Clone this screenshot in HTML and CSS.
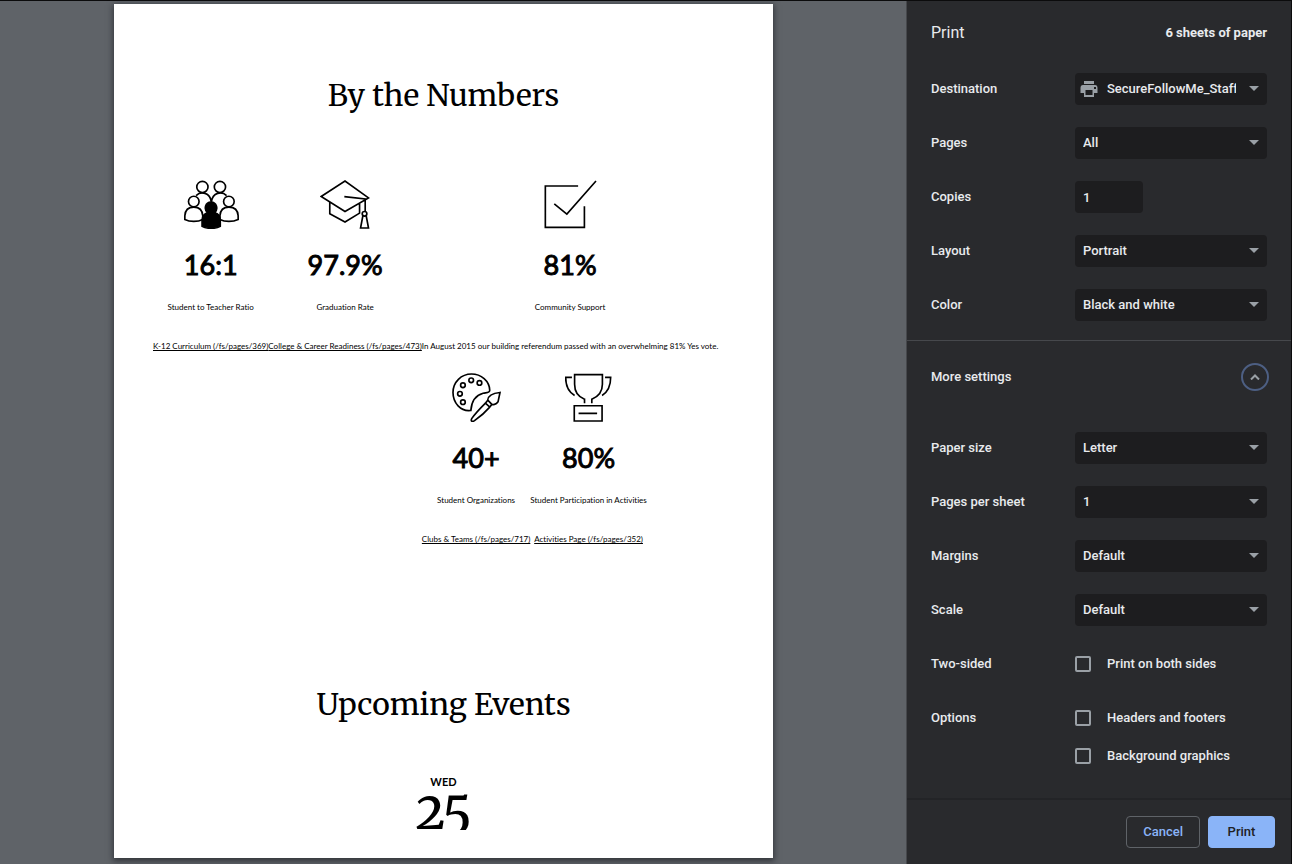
FILE: index.html
```html
<!DOCTYPE html>
<html lang="en">
<head>
<meta charset="utf-8">
<title>Print</title>
<link rel="stylesheet" href="styles.css">
</head>
<body>
<div class="dialog">
  <main class="preview">
    <article class="paper">
      <h1 class="heading">By the Numbers</h1>
      <div class="stats">
        <section class="stat">
          <svg class="icon" viewBox="126 44 168 148" width="56" height="49" aria-hidden="true">
            <circle cx="184" cy="65" r="17"/><circle cx="237" cy="65" r="17"/>
            <path d="M165 91C180 76 207 82 211 110M211 110C215 82 242 76 257 91"/>
            <circle class="blank" cx="158" cy="109" r="16"/><circle class="blank" cx="264" cy="109" r="16"/>
            <path class="blank" d="M131 163V152C132 135 142 126 158 126S184 135 185 152V163C170 171 146 171 131 163ZM237 163V152C238 135 248 126 264 126S291 135 292 152V163C276 171 252 171 237 163Z"/>
            <path class="solid" d="M183 184V166C184 151 191 145 200 143C187 132 193 111 210 111S233 132 221 143C231 145 238 151 238 166V184C224 192 197 192 183 184Z"/>
          </svg>
          <strong class="figure">16:1</strong>
          <span class="label">Student to Teacher Ratio</span>
          <a class="note" href="#">K-12 Curriculum (/fs/pages/369)</a>
        </section>
        <section class="stat">
          <svg class="icon" viewBox="542 44 150 148" width="50" height="49" aria-hidden="true">
            <path d="M545 94L617 47L688 98L617 139ZM571 112V146L617 171L661 144V115M615 94L678 101V139M671 152L664 189H688L681 152"/>
            <circle cx="676" cy="146" r="7"/>
          </svg>
          <strong class="figure">97.9%</strong>
          <span class="label">Graduation Rate</span>
          <a class="note" href="#">College &amp; Career Readiness (/fs/pages/473)</a>
        </section>
        <div class="column">
          <section class="stat">
            <svg class="icon" viewBox="402 44 160 148" width="53" height="49" aria-hidden="true">
              <path d="M505 62H406V187H524V123M433 116L471 147L559 47"/>
            </svg>
            <strong class="figure">81%</strong>
            <span class="label">Community Support</span>
            <span class="note">In August 2015 our building referendum passed with an overwhelming 81% Yes vote.</span>
          </section>
          <div class="pair">
            <section class="stat">
              <svg class="icon" viewBox="124 38 148 148" width="49" height="49" aria-hidden="true">
                <path d="M181 151C150 155 127 128 127 97C127 65 152 41 183 41C212 41 237 62 238 90C238 99 228 97 218 99C196 105 183 122 181 151Z"/>
                <circle cx="157" cy="75" r="7"/><circle cx="182" cy="60" r="7"/><circle cx="207" cy="68" r="7"/><circle cx="148" cy="101" r="7"/><circle cx="157" cy="126" r="7"/>
                <path d="M269 97L263 125C257 134 247 135 243 131L232 120C233 107 249 99 269 97ZM232 120L225 129L238 141L245 132M225 129C210 144 196 158 184 175C179 184 186 187 193 181C210 169 225 156 238 141"/>
              </svg>
              <strong class="figure">40+</strong>
              <span class="label">Student Organizations</span>
              <a class="note" href="#">Clubs &amp; Teams (/fs/pages/717)</a>
            </section>
            <section class="stat">
              <svg class="icon" viewBox="466 38 142 148" width="47" height="49" aria-hidden="true">
                <path d="M525 129V117C506 110 495 98 495 72V43H579V72C579 98 565 110 547 117V129M487 51H468C468 77 476 95 495 106M587 51H604C604 77 596 95 578 106M494 137H578V183H494ZM507 160H563"/>
              </svg>
              <strong class="figure">80%</strong>
              <span class="label">Student Participation in Activities</span>
              <a class="note" href="#">Activities Page (/fs/pages/352)</a>
            </section>
          </div>
        </div>
      </div>
      <h2 class="heading events">Upcoming Events</h2>
      <div class="date"><span class="weekday">WED</span><span class="day">25</span></div>
    </article>
  </main>

  <form class="panel">
    <header class="top"><h2 class="title">Print</h2><span class="sheets">6 sheets of paper</span></header>
    <div class="settings">
      <div class="row"><label for="dest">Destination</label>
        <div class="select printer">
          <svg class="device" viewBox="0 0 18 16" width="18" height="16" aria-hidden="true"><path d="M4 0H14V3H4ZM3 4H15Q17.500 4 17.500 7V12H14V16H4V12H.5V7Q.5 4 3 4ZM5.500 9V14H12.500V9ZM14 6V8H16V6Z" fill-rule="evenodd"/></svg>
          <select id="dest"><option>SecureFollowMe_Staff</option></select>
          <svg class="arrow" viewBox="0 0 10 5" width="10" height="5" aria-hidden="true"><path d="M0 0H10L5 5Z"/></svg>
        </div></div>
      <div class="row"><label for="pages">Pages</label>
        <div class="select"><select id="pages"><option>All</option></select><svg class="arrow" viewBox="0 0 10 5" width="10" height="5" aria-hidden="true"><path d="M0 0H10L5 5Z"/></svg></div></div>
      <div class="row"><label for="copies">Copies</label><input class="copies" id="copies" type="text" inputmode="numeric" value="1"></div>
      <div class="row"><label for="layout">Layout</label>
        <div class="select"><select id="layout"><option>Portrait</option></select><svg class="arrow" viewBox="0 0 10 5" width="10" height="5" aria-hidden="true"><path d="M0 0H10L5 5Z"/></svg></div></div>
      <div class="row"><label for="color">Color</label>
        <div class="select"><select id="color"><option>Black and white</option></select><svg class="arrow" viewBox="0 0 10 5" width="10" height="5" aria-hidden="true"><path d="M0 0H10L5 5Z"/></svg></div></div>
    </div>
    <div class="more">
      <span id="more-label">More settings</span>
      <button class="collapse" type="button" aria-labelledby="more-label" aria-expanded="true"><svg viewBox="0 0 10 6" width="10" height="6" aria-hidden="true"><path d="M1 5.500L5 1.500L9 5.500"/></svg></button>
    </div>
    <div class="settings">
      <div class="row"><label for="size">Paper size</label>
        <div class="select"><select id="size"><option>Letter</option></select><svg class="arrow" viewBox="0 0 10 5" width="10" height="5" aria-hidden="true"><path d="M0 0H10L5 5Z"/></svg></div></div>
      <div class="row"><label for="per">Pages per sheet</label>
        <div class="select"><select id="per"><option>1</option></select><svg class="arrow" viewBox="0 0 10 5" width="10" height="5" aria-hidden="true"><path d="M0 0H10L5 5Z"/></svg></div></div>
      <div class="row"><label for="margins">Margins</label>
        <div class="select"><select id="margins"><option>Default</option></select><svg class="arrow" viewBox="0 0 10 5" width="10" height="5" aria-hidden="true"><path d="M0 0H10L5 5Z"/></svg></div></div>
      <div class="row"><label for="scale">Scale</label>
        <div class="select"><select id="scale"><option>Default</option></select><svg class="arrow" viewBox="0 0 10 5" width="10" height="5" aria-hidden="true"><path d="M0 0H10L5 5Z"/></svg></div></div>
      <div class="row"><span>Two-sided</span>
        <label class="check"><input type="checkbox">Print on both sides</label></div>
      <div class="row options"><span>Options</span>
        <div class="checks">
          <label class="check"><input type="checkbox">Headers and footers</label>
          <label class="check"><input type="checkbox">Background graphics</label>
        </div></div>
    </div>
    <footer class="actions">
      <button class="button cancel" type="button">Cancel</button>
      <button class="button print" type="button">Print</button>
    </footer>
  </form>
</div>
</body>
</html>
```
FILE: styles.css
```css
* { box-sizing: border-box; }

body { margin: 0; background: #292a2d; }

.dialog {
  display: flex;
  min-height: 100vh;
  border-top: 1px solid #0b0b0c;
  border-right: 1px solid #0b0b0c;
}

/* Preview */
.preview {
  flex: 1;
  min-width: 0;
  padding: 3px 133px 6px 114px;
  background: #5f6368;
}

.paper {
  height: 100%;
  padding: 71px 39px 28px;
  background: #fff;
  color: #000;
  font-family: Lato, sans-serif;
  font-size: 8px;
  font-variant-ligatures: none;
  line-height: 12px;
  box-shadow: 0 2px 6px 1px rgba(20, 22, 26, 0.6);
}

.heading {
  margin: 0;
  font-family: Merriweather, "Noto Serif", "DejaVu Serif", serif;
  font-size: 30px;
  font-weight: 400;
  line-height: 40px;
  text-align: center;
}

.stats { display: flex; align-items: flex-start; margin-top: 65px; white-space: nowrap; }
.pair { display: flex; margin-top: 21px; }
.stat { display: flex; flex-direction: column; align-items: center; }

.icon { fill: none; stroke: #000; stroke-width: 5; }
.icon .blank { fill: #fff; }
.icon .solid { fill: #000; }

.figure {
  margin-top: 18px;
  font-size: 27px;
  font-weight: 400;
  line-height: 36px;
  -webkit-text-stroke: 1px #000;
}
.label { margin-top: 18px; }
.note { margin-top: 27px; color: #000; }

.events { margin-top: 139px; }
.date { display: flex; flex-direction: column; align-items: center; margin-top: 51px; }
.weekday { font-size: 11px; font-weight: 700; line-height: 14px; }

/* The page break cuts the day number just below its baseline. */
.day {
  height: 41px;
  overflow: hidden;
  font-family: Merriweather, "Noto Serif", "DejaVu Serif", serif;
  font-size: 52px;
  font-variant-numeric: oldstyle-nums;
  line-height: 44px;
}

/* Settings panel */
.panel {
  display: flex;
  flex: 0 0 385px;
  flex-direction: column;
  border-left: 1px solid #46484c;
  background: #292a2d;
  color: #e8eaed;
  font-family: Roboto, sans-serif;
  font-size: 13px;
  font-weight: 500;
  line-height: 20px;
}

.top { display: flex; align-items: center; justify-content: space-between; padding: 20px 24px; }
.title { margin: 0; font-size: 16px; font-weight: 400; line-height: 24px; }
.sheets { font-weight: 700; }

.settings { display: flex; flex-direction: column; gap: 22px; padding: 8px 24px 19px; }
.row { display: grid; grid-template-columns: 144px 1fr; align-items: center; min-height: 32px; }

.select { position: relative; display: flex; }
.select select {
  width: 100%;
  height: 32px;
  padding: 0 31px 0 8px;
  border: 0;
  border-radius: 4px;
  appearance: none;
  background: #1d1d1f;
  color: inherit;
  font: inherit;
}
.printer select { padding-left: 32px; text-overflow: clip; }
.arrow { position: absolute; top: 13px; right: 8px; fill: #9aa0a6; pointer-events: none; }
.device { position: absolute; top: 8px; left: 5px; fill: #9aa0a6; pointer-events: none; }

.copies {
  width: 68px;
  height: 32px;
  padding: 0 8px;
  border: 0;
  border-radius: 4px;
  background: #1d1d1f;
  color: inherit;
  font: inherit;
}

.more {
  display: flex;
  align-items: center;
  justify-content: space-between;
  padding: 22px 22px 33px 24px;
  border-top: 1px solid #46484c;
}
.collapse {
  display: grid;
  place-items: center;
  width: 28px;
  height: 28px;
  padding: 0;
  border: 2px solid #4d5f83;
  border-radius: 50%;
  background: none;
}
.collapse svg { fill: none; stroke: #9aa0a6; stroke-width: 2; }

.options { align-items: start; }
.options > span { line-height: 32px; }
.checks { display: grid; gap: 6px; }
.check { display: flex; align-items: center; gap: 16px; min-height: 32px; }
.check input {
  width: 16px;
  height: 16px;
  margin: 0;
  border: 2px solid #9aa0a6;
  border-radius: 2px;
  appearance: none;
}

.actions {
  display: flex;
  justify-content: flex-end;
  gap: 8px;
  margin-top: auto;
  padding: 16px;
  border-top: 2px solid #232427;
}
.button {
  min-width: 67px;
  height: 32px;
  padding: 0 16px;
  border: 1px solid #5f6368;
  border-radius: 4px;
  background: none;
  color: #8ab4f8;
  font: inherit;
}
.button.print { border-color: #8ab4f8; background: #8ab4f8; color: #202124; }
```
